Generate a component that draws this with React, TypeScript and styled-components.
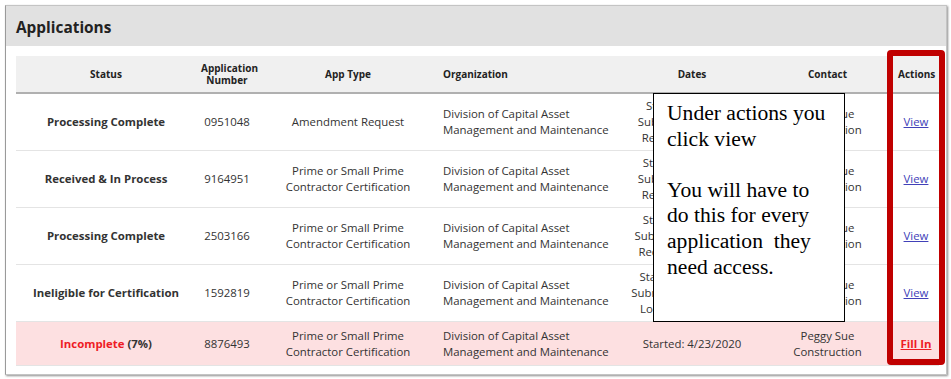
import React from "react";
import styled, { createGlobalStyle } from "styled-components";

const Global = createGlobalStyle`
  html, body { margin: 0; padding: 0; background: #ffffff; }
  body { font-family: "Open Sans", "Noto Sans", Arial, sans-serif; color: #222; }
`;

const Page = styled.div`
  position: relative;
  width: 951px;
  height: 379px;
  padding: 5px 0 0 5px;
  box-sizing: border-box;
`;

const Panel = styled.section`
  width: 942px;
  border: 1px solid #c4c4c4;
  border-left-color: #9a9a9a;
  box-shadow: 1px 1px 2px rgba(0, 0, 0, 0.45);
  background: #fff;
  box-sizing: border-box;
`;

const PanelHeader = styled.header`
  height: 40px;
  background: #e1e1e1;
  display: flex;
  align-items: center;
  padding: 2px 0 0 10px;
  box-sizing: border-box;
  font-size: 15.4px;
  font-weight: 700;
  color: #222;
`;

const PanelBody = styled.div`
  padding: 10px 7px 8px 10px;
`;

const Table = styled.table`
  width: 923px;
  border-collapse: collapse;
  table-layout: fixed;
  font-size: 11.4px;
  line-height: 16px;
`;

const HeadRow = styled.tr`
  background: #f0f0f0;
  border-bottom: 2px solid #b0b0b0;
`;

const Th = styled.th<{ $align?: string }>`
  height: 36px;
  padding: 0 5px;
  font-size: 10px;
  line-height: 12px;
  font-weight: 700;
  color: #222;
  text-align: ${(p) => p.$align || "center"};
`;

const Row = styled.tr<{ $alert?: boolean }>`
  background: ${(p) => (p.$alert ? "#fde0e1" : "#fff")};
  border-bottom: 1px solid #e4e4e4;
`;

const Td = styled.td<{ $align?: string; $bold?: boolean }>`
  padding: 4px 5px;
  height: 48px;
  text-align: ${(p) => p.$align || "center"};
  font-weight: ${(p) => (p.$bold ? 700 : 400)};
  color: #333;
  vertical-align: middle;
  white-space: nowrap;
  overflow: hidden;
`;

const AlertTd = styled(Td)`
  height: 35px;
`;

const Red = styled.span`
  color: #ee1c25;
`;

const Dark = styled.span`
  color: #333;
`;

const Link = styled.a<{ $danger?: boolean }>`
  color: ${(p) => (p.$danger ? "#ee1c25" : "#4141b8")};
  font-weight: ${(p) => (p.$danger ? 700 : 400)};
  text-decoration: underline;
  cursor: pointer;
`;

const Callout = styled.div`
  position: absolute;
  left: 653px;
  top: 93px;
  width: 192px;
  height: 229px;
  box-sizing: border-box;
  border: 1px solid #000;
  background: #fff;
  padding: 7px 6px 0 13px;
  font-family: "Liberation Serif", "Times New Roman", serif;
  font-size: 21.6px;
  line-height: 25.6px;
  color: #000;
  white-space: pre;
`;

const Highlight = styled.div`
  position: absolute;
  left: 887px;
  top: 50px;
  width: 58px;
  height: 315px;
  box-sizing: border-box;
  border: 6px solid #c00000;
  border-radius: 4px;
`;

type App = {
  status: string;
  num: string;
  type: string[];
  dates: string[];
};

const rows: App[] = [
  {
    status: "Processing Complete",
    num: "0951048",
    type: ["Amendment Request"],
    dates: ["Started: 1/6/2020", "Submitted: 1/9/2020", "Received: 1/9/2020"],
  },
  {
    status: "Received & In Process",
    num: "9164951",
    type: ["Prime or Small Prime", "Contractor Certification"],
    dates: ["Started: 11/4/2019", "Submitted: 1/8/2020", "Received: 1/8/2020"],
  },
  {
    status: "Processing Complete",
    num: "2503166",
    type: ["Prime or Small Prime", "Contractor Certification"],
    dates: ["Started: 11/4/2019", "Submitted: 11/5/2019", "Received: 11/5/2019"],
  },
  {
    status: "Ineligible for Certification",
    num: "1592819",
    type: ["Prime or Small Prime", "Contractor Certification"],
    dates: ["Started: 10/21/2019", "Submitted: 10/22/2019", "Locked: 10/22/2019"],
  },
];

const Lines = ({ lines }: { lines: string[] }) => (
  <>
    {lines.map((l, i) => (
      <React.Fragment key={i}>
        {i > 0 && <br />}
        {l}
      </React.Fragment>
    ))}
  </>
);

const org = ["Division of Capital Asset", "Management and Maintenance"];
const contact = ["Peggy Sue", "Construction"];

export default function App() {
  return (
    <Page>
      <Global />
      <Panel>
        <PanelHeader>Applications</PanelHeader>
        <PanelBody>
          <Table>
            <colgroup>
              <col style={{ width: 180 }} />
              <col style={{ width: 62 }} />
              <col style={{ width: 180 }} />
              <col style={{ width: 184 }} />
              <col style={{ width: 140 }} />
              <col style={{ width: 131 }} />
              <col style={{ width: 46 }} />
            </colgroup>
            <thead>
              <HeadRow>
                <Th>Status</Th>
                <Th>
                  Application
                  <br />
                  Number
                </Th>
                <Th>App Type</Th>
                <Th $align="left">Organization</Th>
                <Th>Dates</Th>
                <Th>Contact</Th>
                <Th>Actions</Th>
              </HeadRow>
            </thead>
            <tbody>
              {rows.map((r) => (
                <Row key={r.num}>
                  <Td $bold>{r.status}</Td>
                  <Td>{r.num}</Td>
                  <Td>
                    <Lines lines={r.type} />
                  </Td>
                  <Td $align="left">
                    <Lines lines={org} />
                  </Td>
                  <Td>
                    <Lines lines={r.dates} />
                  </Td>
                  <Td>
                    <Lines lines={contact} />
                  </Td>
                  <Td>
                    <Link>View</Link>
                  </Td>
                </Row>
              ))}
              <Row $alert>
                <AlertTd $bold>
                  <Red>Incomplete</Red> <Dark>(7%)</Dark>
                </AlertTd>
                <AlertTd>8876493</AlertTd>
                <AlertTd>
                  <Lines lines={["Prime or Small Prime", "Contractor Certification"]} />
                </AlertTd>
                <AlertTd $align="left">
                  <Lines lines={org} />
                </AlertTd>
                <AlertTd>Started: 4/23/2020</AlertTd>
                <AlertTd>
                  <Lines lines={contact} />
                </AlertTd>
                <AlertTd>
                  <Link $danger>Fill In</Link>
                </AlertTd>
              </Row>
            </tbody>
          </Table>
        </PanelBody>
      </Panel>
      <Callout>
        {"Under actions you\nclick view\n\nYou will have to\ndo this for every\napplication  they\nneed access."}
      </Callout>
      <Highlight />
    </Page>
  );
}
